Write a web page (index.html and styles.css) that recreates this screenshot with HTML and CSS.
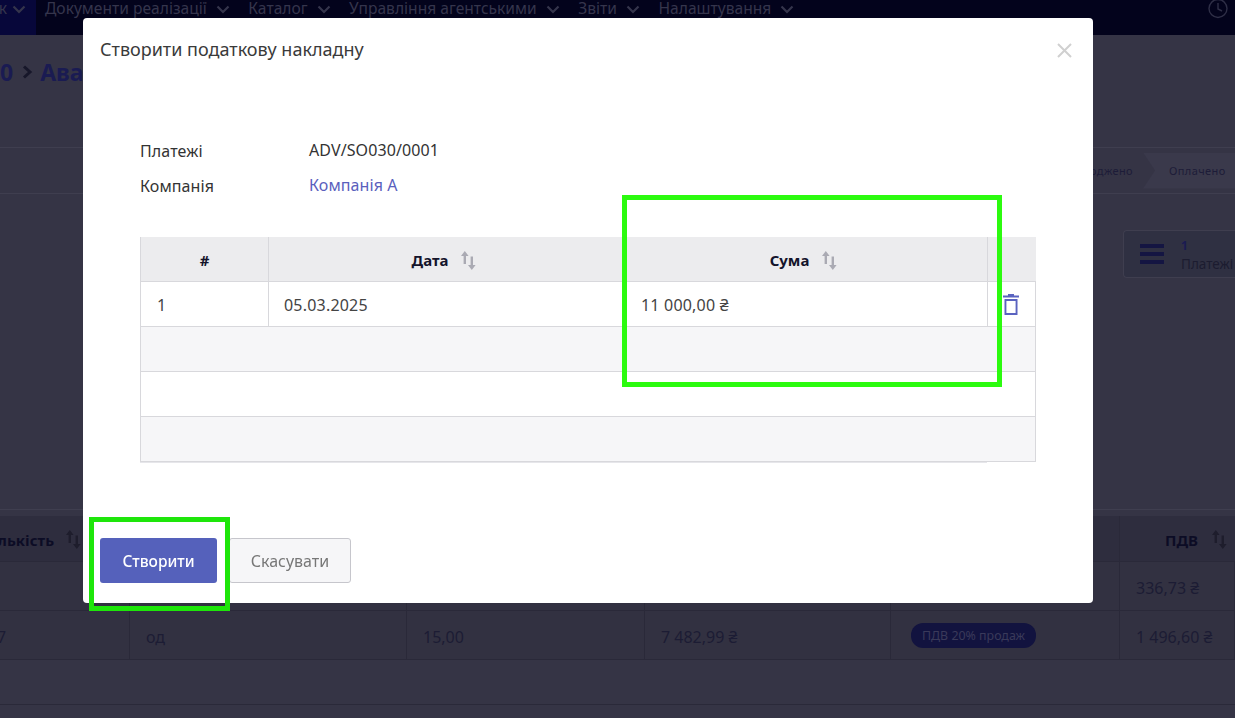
FILE: index.html
```html
<!DOCTYPE html>
<html lang="uk">
<head>
<meta charset="utf-8">
<title>Створити податкову накладну</title>
<link rel="stylesheet" href="styles.css">
</head>
<body>
<svg class="defs" width="0" height="0" aria-hidden="true">
  <symbol id="sort" viewBox="0 0 15 19">
    <path d="M3.8 0 L7.6 5 H5 V13 H2.6 V5 H0 Z M10.8 19 L7 14 H9.6 V5.5 H12 V14 H14.6 Z"/>
  </symbol>
  <symbol id="chev" viewBox="0 0 14 9">
    <path d="M1.5 1.5 L7 7 L12.5 1.5" fill="none" stroke="currentColor" stroke-width="2.2"/>
  </symbol>
</svg>

<div class="page">
  <nav class="nav">
    <div class="nav-first"><span>к</span><svg class="chev"><use href="#chev"/></svg></div>
    <div class="nav-item"><span>Документи реалізації</span><svg class="chev"><use href="#chev"/></svg></div>
    <div class="nav-item"><span>Каталог</span><svg class="chev"><use href="#chev"/></svg></div>
    <div class="nav-item"><span>Управління агентськими</span><svg class="chev"><use href="#chev"/></svg></div>
    <div class="nav-item"><span>Звіти</span><svg class="chev"><use href="#chev"/></svg></div>
    <div class="nav-item"><span>Налаштування</span><svg class="chev"><use href="#chev"/></svg></div>
    <svg class="clock" viewBox="0 0 20 20"><circle cx="10" cy="8.5" r="9" fill="none" stroke="#2f2f47" stroke-width="1.4"/><path d="M10 3 V9 L14 11" fill="none" stroke="#2f2f47" stroke-width="1.4"/></svg>
  </nav>
  <div class="crumbs"><span>0</span><svg class="crumb-sep" viewBox="0 0 11 14"><path d="M2 1.5 L8 7 L2 12.5" fill="none" stroke="#17172a" stroke-width="3"/></svg><span>Авансовий платіж</span></div>
  <div class="status">
    <span class="step">Підтверджено</span>
    <span class="step step-last">Оплачено</span>
  </div>
  <div class="stats">
    <div class="stat">
      <div class="burger"><i></i><i></i><i></i></div>
      <div class="stat-text"><b>1</b><span>Платежі</span></div>
    </div>
  </div>
  <div class="bg-table">
    <div class="bg-row bg-head">
      <div class="bg-cell bg-qty">Кількість <svg class="sort sort-dark"><use href="#sort"/></svg></div>
      <div class="bg-cell"></div><div class="bg-cell"></div><div class="bg-cell"></div><div class="bg-cell"></div>
      <div class="bg-cell bg-vat">ПДВ <svg class="sort sort-dark"><use href="#sort"/></svg></div>
    </div>
    <div class="bg-row">
      <div class="bg-cell"></div><div class="bg-cell"></div><div class="bg-cell"></div><div class="bg-cell"></div><div class="bg-cell"></div>
      <div class="bg-cell">336,73 ₴</div>
    </div>
    <div class="bg-row">
      <div class="bg-cell bg-clip">7</div>
      <div class="bg-cell">од</div>
      <div class="bg-cell">15,00</div>
      <div class="bg-cell">7 482,99 ₴</div>
      <div class="bg-cell"><span class="badge">ПДВ 20% продаж</span></div>
      <div class="bg-cell">1 496,60 ₴</div>
    </div>
    <div class="bg-row bg-empty"></div>
  </div>
</div>

<div class="modal">
  <header class="modal-head">
    <h1 class="modal-title">Створити податкову накладну</h1>
    <svg class="close" viewBox="0 0 15 15"><path d="M1 1 L14 14 M14 1 L1 14" fill="none" stroke="#d0d0d0" stroke-width="2"/></svg>
  </header>
  <div class="fields">
    <div class="field"><span class="field-label">Платежі</span><span class="field-value">ADV/SO030/0001</span></div>
    <div class="field"><span class="field-label">Компанія</span><span class="field-value field-link">Компанія А</span></div>
  </div>
  <div class="table">
    <div class="row row-head">
      <div class="cell cell-center">#</div>
      <div class="cell cell-center cell-sort">Дата <svg class="sort"><use href="#sort"/></svg></div>
      <div class="cell cell-center cell-sort">Сума <svg class="sort"><use href="#sort"/></svg></div>
      <div class="cell"></div>
    </div>
    <div class="row">
      <div class="cell cell-first">1</div>
      <div class="cell">05.03.2025</div>
      <div class="cell">11 000,00 ₴</div>
      <div class="cell cell-action">
        <svg class="trash" viewBox="0 0 16 22"><path d="M5 1 H11 V2.6 H16 V4.4 H0 V2.6 H5 Z M1.5 6 H14.5 V22 H1.5 Z M3.4 8 V20 H12.6 V8 Z" fill="#5a63c0" fill-rule="evenodd"/></svg>
      </div>
    </div>
    <div class="row row-stripe"></div>
    <div class="row"></div>
    <div class="row row-stripe"></div>
  </div>
  <footer class="modal-foot">
    <button class="btn btn-primary" type="button">Створити</button>
    <button class="btn btn-secondary" type="button">Скасувати</button>
  </footer>
</div>

<div class="mark mark-sum"></div>
<div class="mark mark-btn"></div>
</body>
</html>
```

FILE: styles.css
```css
* { box-sizing: border-box; }
html, body { margin: 0; height: 100%; overflow: hidden; }
body { font-family: "Noto Sans", "Open Sans", sans-serif; font-size: 16px; background: #353445; color: #1a1a33; }
.defs { position: absolute; }

.page { height: 718px; overflow: hidden; }
.nav { height: 35px; background: #03031c; display: flex; align-items: flex-start; color: #35354c; font-size: 15.6px; line-height: 17px; position: relative; }
.nav-first { width: 36px; height: 35px; background: #07073a; display: flex; justify-content: flex-end; gap: 5px; padding-right: 10px; }
.nav-item { display: flex; margin-left: 18.5px; gap: 9px; align-items: flex-start; white-space: nowrap; }
.nav-first + .nav-item { margin-left: 9px; }
.chev { width: 14px; height: 9px; margin-top: 5px; color: #35354c; flex: none; }
.clock { position: absolute; right: 7px; top: 0; width: 20px; height: 20px; }

.crumbs { height: 113px; padding-top: 21px; font-size: 23px; font-weight: 700; line-height: 32px; color: #1a1b52; white-space: nowrap; border-bottom: 1px solid #3f3e4f; display: flex; align-items: flex-start; }
.crumb-sep { width: 11px; height: 14px; margin: 9px 7px 0 9px; flex: none; }
.status { height: 46px; border-bottom: 1px solid #3f3e4f; display: flex; justify-content: flex-end; align-items: center; font-size: 11px; letter-spacing: 0.4px; color: #1d1c38; }
.step-last { width: 92px; height: 36px; line-height: 36px; padding-left: 26px; background: #3a394b; clip-path: polygon(0 0, 100% 0, 100% 100%, 0 100%, 12px 50%); }
.step { margin-right: 10px; white-space: nowrap; }
.step-last { margin-right: 0; }
.stats { height: 316px; display: flex; justify-content: flex-end; padding-top: 36px; border-bottom: 1px solid #3f3e4f; }
.stat { width: 112px; height: 48px; border: 1px solid #3f3e4f; border-right: 0; border-radius: 4px 0 0 4px; background: #2f3042; display: flex; align-items: center; gap: 17px; padding-left: 16px; }
.burger { display: flex; flex-direction: column; gap: 4px; }
.burger i { display: block; width: 24px; height: 4px; background: #141542; }
.stat-text { display: flex; flex-direction: column; font-size: 13.5px; line-height: 18px; color: #1c1c30; padding-top: 2px; }
.stat-text b { font-size: 12px; color: #1a1b52; }

.bg-table { margin-top: 6px; }
.bg-row { display: grid; grid-template-columns: 130px 277px 238px 246px 229px 115px; height: 49px; border-bottom: 1px solid #2a2939; background: #323141; color: #1c1c34; }
.bg-head { height: 46px; background: #2e2d3e; font-weight: 700; font-size: 15px; color: #0c0c25; }
.bg-empty { display: block; height: 45px; background: #353445; }
.bg-cell { display: flex; align-items: center; padding: 3px 0 0 16px; border-right: 1px solid #2a2939; white-space: nowrap; overflow: hidden; }
.bg-qty { justify-content: flex-end; padding: 2px 48px 0 0; gap: 12px; }
.bg-vat { justify-content: flex-end; padding: 2px 8px 0 0; gap: 14px; border-right: 0; }
.bg-clip { padding-left: 0; text-indent: -3px; }
.badge { background: #12133f; color: #3a3a5a; border-radius: 12px; height: 25px; padding: 0 11px; font-size: 12.4px; line-height: 25px; margin: -3px 0 0 4px; }

.sort { width: 15px; height: 19px; fill: #aaaab3; flex: none; }
.sort-dark { fill: #1e1d2c; }

.modal { position: fixed; left: 83px; top: 18px; width: 1010px; height: 585px; background: #fff; border-radius: 4px; display: flex; flex-direction: column; color: #333; }
.modal-head { height: 64px; display: flex; justify-content: space-between; align-items: center; padding: 0 21px 0 17px; }
.modal-title { margin: 0 0 2px; font-size: 18px; font-weight: 400; color: #3a3a3a; }
.close { width: 15px; height: 15px; }

.fields { margin: 50px 57px 0; display: flex; flex-direction: column; letter-spacing: 0.1px; }
.field { display: flex; height: 35px; align-items: center; color: #333; }
.field-label { width: 169px; padding-top: 2px; }
.field-link { color: #5a60bd; }

.table { margin: 35px 57px 0; width: 896px; }
.table::after { content: ""; display: block; width: 847px; height: 1px; background: #e6e6ea; }
.row { display: grid; grid-template-columns: 128px 357px 362px 49px; height: 45px; border-bottom: 1px solid #d8d8dc; border-left: 1px solid #d8d8dc; border-right: 1px solid #d8d8dc; color: #444; letter-spacing: 0.2px; }
.row-head { background: #ececee; color: #14142b; font-weight: 700; font-size: 15px; border-right: 0; letter-spacing: 0; }
.row-stripe { background: #f6f6f8; }
.cell { display: flex; align-items: center; padding: 2px 0 0 15px; border-right: 1px solid #d8d8dc; }
.cell-first { padding-left: 16px; }
.cell:last-child { border-right: 0; }
.cell-center { justify-content: center; padding: 2px 0 0; gap: 13px; }
.cell-sort { padding-right: 6px; }
.cell-action { padding: 0 0 0 15px; }
.trash { width: 16px; height: 22px; }

.modal-foot { margin-top: auto; padding: 0 17px 20px; display: flex; gap: 12px; }
.btn { height: 45px; border-radius: 3px; font-family: inherit; font-size: 16px; padding: 0; }
.btn-primary { width: 117px; background: #5561bb; color: #fff; border: 0; font-size: 15.5px; font-weight: 500; }
.btn-secondary { width: 122px; background: #f6f6f8; color: #777; border: 1px solid #c6c6cc; }

.mark { position: fixed; border-style: solid; border-width: 5px; }
.mark-sum { left: 622px; top: 195px; width: 380px; height: 192px; border-color: #2cfb0f; }
.mark-btn { left: 89px; top: 517px; width: 141px; height: 94px; border-color: #1ee60a; }
```
